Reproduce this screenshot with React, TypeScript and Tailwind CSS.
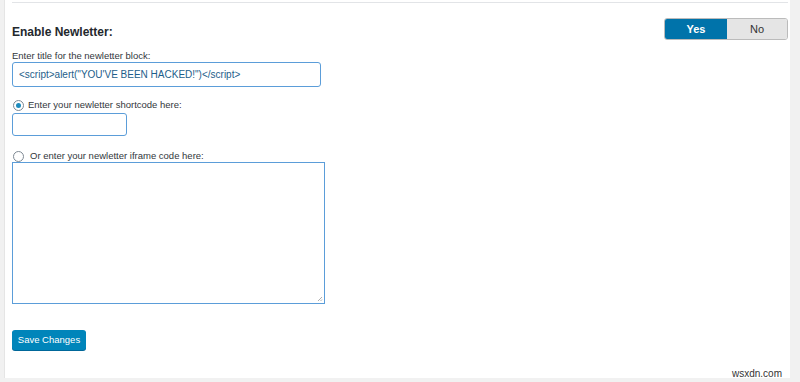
const font = { fontFamily: '"Liberation Sans", Arial, sans-serif' }

const Radio = ({ checked }: { checked: boolean }) => (
  <span className="flex h-[11px] w-[11px] shrink-0 items-center justify-center rounded-full border border-[#7e8993] bg-white">
    {checked && <span className="h-[5px] w-[5px] rounded-full bg-[#1e8cbe]" />}
  </span>
)

const App = () => {
  return (
    <div className="flex h-[382px] w-[800px] bg-[#f1f1f1] pb-[4px] pl-[4px] pr-[10px]" style={font}>
      <div className="relative flex flex-1 flex-col border-l border-[#e5e5e5] bg-white pl-[7px] pr-[2px] text-[#23282d]">
        <div className="mt-[2px] border-t border-[#e2e4e7]" />

        <div className="mt-[15px] flex items-start justify-between">
          <h2 className="mt-[6px] text-[12px] font-bold leading-[16px]">Enable Newletter:</h2>
          <div className="flex h-[22px] overflow-hidden rounded-[3px] border border-[#bbb] text-[11px]">
            <span className="flex w-[62px] items-center justify-center bg-[#0073aa] font-bold text-white">Yes</span>
            <span className="flex w-[60px] items-center justify-center bg-[#e5e5e5] text-[#333]">No</span>
          </div>
        </div>

        <label className="mt-[10px] text-[9.5px] leading-[12px] text-[#32373c]">Enter title for the newletter block:</label>
        <div className="flex h-[25px] w-[309px] items-center rounded-[3px] border border-[#5b9dd9] px-[6px] text-[10px] text-[#1d5e8a]">
          {'<script>alert("YOU\'VE BEEN HACKED!")</script>'}
        </div>

        <div className="mt-[12px] flex h-[12px] items-center gap-[4px] pl-[1px] text-[9.5px] leading-[12px] text-[#32373c]">
          <Radio checked />
          <span>Enter your newletter shortcode here:</span>
        </div>
        <div className="mt-[2px] h-[23px] w-[115px] rounded-[3px] border border-[#5b9dd9]" />

        <div className="mt-[14px] flex h-[12px] items-center gap-[6px] pl-[1px] text-[9.5px] leading-[12px] text-[#32373c]">
          <Radio checked={false} />
          <span>Or enter your newletter iframe code here:</span>
        </div>
        <div className="relative h-[142px] w-[313px] border border-[#5b9dd9]">
          <svg className="absolute bottom-[1px] right-[1px]" width="6" height="6" viewBox="0 0 6 6">
            <path d="M5 1L1 5M5 3.5L3.5 5" stroke="#999" strokeWidth="0.8" />
          </svg>
        </div>

        <div className="mt-[26px] flex">
          <button className="h-[20px] w-[74px] rounded-[3px] bg-[#0085ba] text-[9.5px] text-white shadow-[0_1px_0_#006799]">
            Save Changes
          </button>
        </div>

        <span className="absolute bottom-[-3px] right-[8px] text-[10px] text-[#333]">wsxdn.com</span>
      </div>
    </div>
  )
}

export default App
